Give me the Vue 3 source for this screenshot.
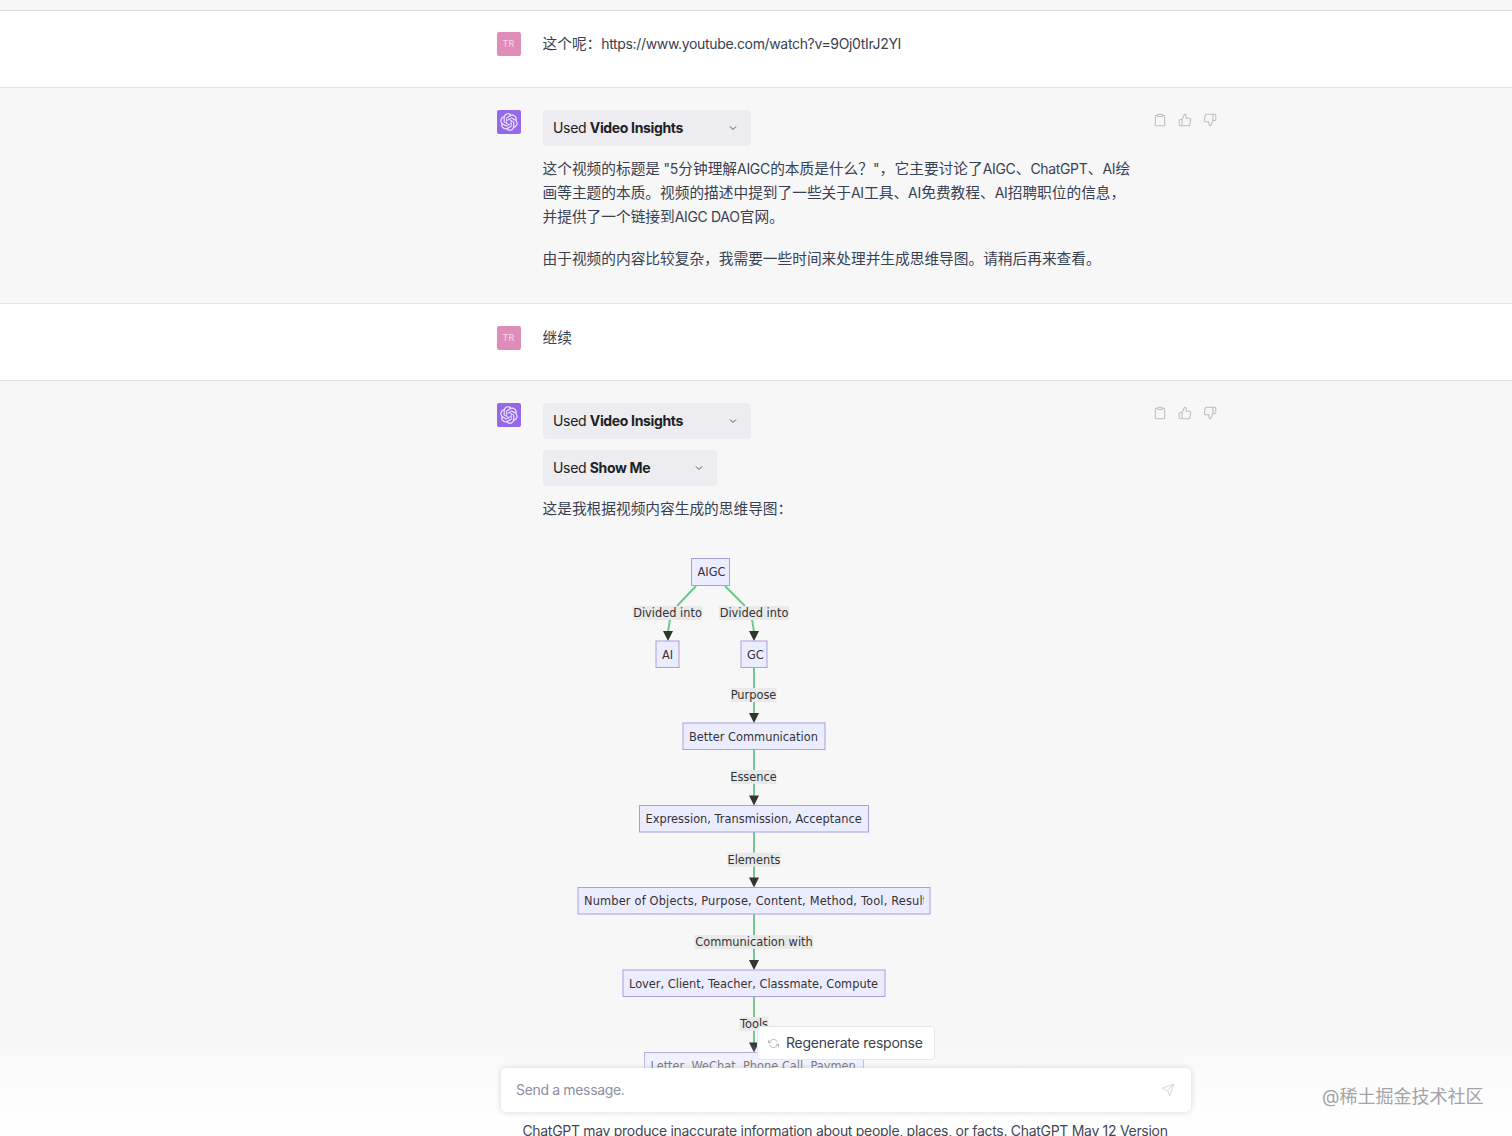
<script setup>
const logo = 'M37.5324 16.8707C37.9808 15.5241 38.1363 14.0974 37.9886 12.6859C37.8409 11.2744 37.3934 9.91076 36.676 8.68622C35.6126 6.83404 33.9882 5.3676 32.0373 4.4985C30.0864 3.62941 27.9098 3.40259 25.8215 3.85078C24.8796 2.7893 23.7219 1.94125 22.4257 1.36341C21.1295 0.785575 19.7249 0.491269 18.3058 0.500197C16.1708 0.495044 14.0893 1.16803 12.3614 2.42214C10.6335 3.67624 9.34853 5.44666 8.6917 7.47815C7.30085 7.76286 5.98686 8.3414 4.8377 9.17505C3.68854 10.0087 2.73073 11.0782 2.02839 12.312C0.956464 14.1591 0.498905 16.2988 0.721698 18.4228C0.944492 20.5467 1.83612 22.5449 3.268 24.1293C2.81966 25.4759 2.66413 26.9026 2.81182 28.3141C2.95951 29.7256 3.40701 31.0892 4.12437 32.3138C5.18791 34.1659 6.8123 35.6322 8.76321 36.5013C10.7141 37.3704 12.8907 37.5973 14.9789 37.1492C15.9208 38.2107 17.0786 39.0587 18.3747 39.6366C19.6709 40.2144 21.0755 40.5087 22.4946 40.4998C24.6307 40.5054 26.7133 39.8321 28.4418 38.5772C30.1704 37.3223 31.4556 35.5506 32.1119 33.5179C33.5027 33.2332 34.8167 32.6547 35.9659 31.821C37.115 30.9874 38.0728 29.9178 38.7752 28.684C39.8458 26.8371 40.3023 24.6979 40.0789 22.5748C39.8556 20.4517 38.9639 18.4544 37.5324 16.8707ZM22.4978 37.8849C20.7443 37.8874 19.0459 37.2733 17.6994 36.1501C17.7601 36.117 17.8666 36.0586 17.936 36.0161L25.9004 31.4156C26.1003 31.3019 26.2663 31.137 26.3813 30.9378C26.4964 30.7386 26.5563 30.5124 26.5549 30.2825V19.0542L29.9213 20.998C29.9389 21.0068 29.9541 21.0198 29.9656 21.0359C29.977 21.052 29.9842 21.0707 29.9867 21.0902V30.3889C29.9842 32.375 29.1946 34.2791 27.7909 35.6841C26.3872 37.0892 24.4838 37.8806 22.4978 37.8849ZM6.39227 31.0064C5.51397 29.4888 5.19742 27.7107 5.49804 25.9832C5.55718 26.0187 5.66048 26.0818 5.73461 26.1244L13.699 30.7248C13.8975 30.8408 14.1233 30.902 14.3532 30.902C14.583 30.902 14.8088 30.8408 15.0073 30.7248L24.731 25.1103V28.9979C24.7321 29.0177 24.7283 29.0376 24.7199 29.0556C24.7115 29.0736 24.6988 29.0893 24.6829 29.1012L16.6317 33.7497C14.9096 34.7416 12.8643 35.0097 10.9447 34.4954C9.02506 33.9811 7.38785 32.7263 6.39227 31.0064ZM4.29707 13.6194C5.17156 12.0998 6.55279 10.9364 8.19885 10.3327C8.19885 10.4013 8.19491 10.5228 8.19491 10.6071V19.808C8.19351 20.0378 8.25334 20.2638 8.36823 20.4629C8.48312 20.6619 8.64893 20.8267 8.84863 20.9404L18.5723 26.5542L15.206 28.4979C15.1894 28.5089 15.1703 28.5155 15.1505 28.5173C15.1307 28.5191 15.1107 28.516 15.0924 28.5082L7.04046 23.8557C5.32135 22.8601 4.06716 21.2235 3.55289 19.3046C3.03862 17.3858 3.30624 15.3413 4.29707 13.6194ZM31.955 20.0556L22.2312 14.4411L25.5976 12.4981C25.6142 12.4872 25.6333 12.4805 25.6531 12.4787C25.6729 12.4769 25.6928 12.4801 25.7111 12.4879L33.7631 17.1364C34.9967 17.849 36.0017 18.8982 36.6606 20.1613C37.3194 21.4244 37.6047 22.849 37.4832 24.2684C37.3617 25.6878 36.8382 27.0432 35.9743 28.1759C35.1103 29.3086 33.9415 30.1717 32.6047 30.6641C32.6047 30.5947 32.6047 30.4733 32.6047 30.3889V21.188C32.6066 20.9586 32.5474 20.7328 32.4332 20.5338C32.319 20.3348 32.154 20.1698 31.955 20.0556ZM35.3055 15.0128C35.2464 14.9765 35.1431 14.9142 35.069 14.8717L27.1045 10.2712C26.906 10.1554 26.6803 10.0943 26.4504 10.0943C26.2206 10.0943 25.9948 10.1554 25.7963 10.2712L16.0726 15.8858V11.9982C16.0715 11.9783 16.0753 11.9585 16.0837 11.9405C16.0921 11.9225 16.1048 11.9068 16.1207 11.8949L24.1719 7.25025C25.4053 6.53903 26.8158 6.19376 28.2383 6.25482C29.6608 6.31589 31.0364 6.78077 32.2044 7.59508C33.3723 8.40939 34.2842 9.53945 34.8334 10.8531C35.3826 12.1667 35.5464 13.6095 35.3055 15.0128ZM14.2424 21.9419L10.8752 19.9981C10.8576 19.9893 10.8423 19.9763 10.8309 19.9602C10.8195 19.9441 10.8122 19.9254 10.8098 19.9058V10.6071C10.8107 9.18295 11.2173 7.78848 11.9819 6.58696C12.7466 5.38544 13.8377 4.42659 15.1275 3.82264C16.4173 3.21869 17.8524 2.99464 19.2649 3.1767C20.6775 3.35876 22.0089 3.93941 23.1034 4.85067C23.0427 4.88379 22.937 4.94215 22.8668 4.98473L14.9024 9.58517C14.7025 9.69878 14.5366 9.86356 14.4215 10.0626C14.3065 10.2616 14.2466 10.4877 14.2479 10.7175L14.2424 21.9419ZM16.071 17.9991L20.4018 15.4978L24.7325 17.9975V22.9985L20.4018 25.4983L16.071 22.9985V17.9991Z'

const nodes = [
  { x: 691.5, y: 558.5, w: 38, h: 27, t: 'AIGC' },
  { x: 656, y: 641, w: 23, h: 26.5, t: 'AI' },
  { x: 741, y: 641, w: 26, h: 26.5, t: 'GC' },
  { x: 683, y: 723, w: 142, h: 26.5, t: 'Better Communication' },
  { x: 639.5, y: 805.5, w: 229, h: 26.5, t: 'Expression, Transmission, Acceptance' },
  { x: 578, y: 887.5, w: 352, h: 26.5, t: 'Number of Objects, Purpose, Content, Method, Tool, Result', wide: true },
  { x: 623, y: 970, w: 262, h: 26.5, t: 'Lover, Client, Teacher, Classmate, Compute' },
  { x: 644.5, y: 1052.5, w: 219, h: 26.5, t: 'Letter, WeChat, Phone Call, Paymen' }
]
const edges = [
  'M696 586 L677 606 M670 619 L668 632',
  'M725 586 L745 606 M752 619 L754 632',
  'M754 667 V714', 'M754 749 V796', 'M754 832 V878', 'M754 914 V961', 'M754 997 V1043'
]
const arrows = [[668, 641], [754, 641], [754, 723], [754, 805.5], [754, 887.5], [754, 970], [754, 1052.5]]
const labels = [
  { x: 667.5, y: 613, w: 70, t: 'Divided into' },
  { x: 754, y: 613, w: 70, t: 'Divided into' },
  { x: 753.5, y: 695, w: 46, t: 'Purpose' },
  { x: 753.5, y: 777, w: 45, t: 'Essence' },
  { x: 754, y: 859.5, w: 53, t: 'Elements' },
  { x: 754, y: 942, w: 119, t: 'Communication with' },
  { x: 754, y: 1024, w: 29, t: 'Tools' }
]
</script>

<template>
  <div class="page">
    <div class="strip"></div>

    <section class="row user">
      <div class="avatar tr">TR</div>
      <div class="main"><p>这个呢：<span class="en">https://www.youtube.com/watch?v=9Oj0tIrJ2YI</span></p></div>
    </section>

    <section class="row bot">
      <div class="avatar gpt"><svg viewBox="0 0 41 41" class="logo"><path :d="logo" fill="currentColor" /></svg></div>
      <div class="main">
        <div class="chip wide"><span class="en">Used <b>Video Insights</b></span><svg class="chev" viewBox="0 0 24 24"><polyline points="6 9 12 15 18 9" /></svg></div>
        <div class="prose">
          <p>这个视频的标题是<span class="en"> "5</span>分钟理解<span class="en">AIGC</span>的本质是什么？<span class="en">"</span>，<span class="en gap"> </span>它主要讨论了<span class="en">AIGC</span>、<span class="en">ChatGPT</span>、<span class="en">AI</span>绘<span>画等主题的本质。视频的描述中提到了一些关于</span><span class="en">AI</span>工具、<span class="en">AI</span>免费教程、<span class="en">AI</span>招聘职位的信息，<span>并提供了一个链接到</span><span class="en">AIGC DAO</span>官网。</p>
          <p>由于视频的内容比较复杂，我需要一些时间来处理并生成思维导图。请稍后再来查看。</p>
        </div>
      </div>
      <div class="actions">
        <svg viewBox="0 0 24 24"><path d="M16 4h2a2 2 0 0 1 2 2v14a2 2 0 0 1-2 2H6a2 2 0 0 1-2-2V6a2 2 0 0 1 2-2h2" /><rect x="8" y="2" width="8" height="4" rx="1" /></svg>
        <svg viewBox="0 0 24 24"><path d="M14 9V5a3 3 0 0 0-3-3l-4 9v11h11.28a2 2 0 0 0 2-1.7l1.38-9a2 2 0 0 0-2-2.3zM7 22H4a2 2 0 0 1-2-2v-7a2 2 0 0 1 2-2h3" /></svg>
        <svg viewBox="0 0 24 24"><path d="M10 15v4a3 3 0 0 0 3 3l4-9V2H5.72a2 2 0 0 0-2 1.7l-1.38 9a2 2 0 0 0 2 2.3zm7-13h2.67A2.31 2.31 0 0 1 22 4v7a2.31 2.31 0 0 1-2.33 2H17" /></svg>
      </div>
    </section>

    <section class="row user second">
      <div class="avatar tr">TR</div>
      <div class="main"><p>继续</p></div>
    </section>

    <section class="row bot last">
      <div class="avatar gpt"><svg viewBox="0 0 41 41" class="logo"><path :d="logo" fill="currentColor" /></svg></div>
      <div class="main">
        <div class="chip wide"><span class="en">Used <b>Video Insights</b></span><svg class="chev" viewBox="0 0 24 24"><polyline points="6 9 12 15 18 9" /></svg></div>
        <div class="chip narrow"><span class="en">Used <b>Show Me</b></span><svg class="chev" viewBox="0 0 24 24"><polyline points="6 9 12 15 18 9" /></svg></div>
        <p class="lead">这是我根据视频内容生成的思维导图：</p>
        <svg class="diagram" viewBox="543 530 500 620" width="500" height="620">
          <path v-for="(e, i) in edges" :key="'e' + i" :d="e" class="edge" />
          <polygon v-for="(a, i) in arrows" :key="'a' + i" class="arrow"
            :points="`${a[0]},${a[1]} ${a[0] - 5},${a[1] - 10} ${a[0] + 5},${a[1] - 10}`" />
          <g v-for="(l, i) in labels" :key="'l' + i">
            <rect class="label-bg" :x="l.x - l.w / 2" :y="l.y - 7" :width="l.w" height="14" />
            <text class="label" :x="l.x" :y="l.y + 4">{{ l.t }}</text>
          </g>
          <g v-for="(n, i) in nodes" :key="'n' + i">
            <rect class="node" :x="n.x" :y="n.y" :width="n.w" :height="n.h" />
            <svg :x="n.x + 6" :y="n.y" :width="Math.max(n.w - 12, 30)" :height="n.h">
              <text class="node-text" :class="{ stretch: n.wide }" x="0" y="17.5">{{ n.t }}</text>
            </svg>
          </g>
        </svg>
      </div>
      <div class="actions">
        <svg viewBox="0 0 24 24"><path d="M16 4h2a2 2 0 0 1 2 2v14a2 2 0 0 1-2 2H6a2 2 0 0 1-2-2V6a2 2 0 0 1 2-2h2" /><rect x="8" y="2" width="8" height="4" rx="1" /></svg>
        <svg viewBox="0 0 24 24"><path d="M14 9V5a3 3 0 0 0-3-3l-4 9v11h11.28a2 2 0 0 0 2-1.7l1.38-9a2 2 0 0 0-2-2.3zM7 22H4a2 2 0 0 1-2-2v-7a2 2 0 0 1 2-2h3" /></svg>
        <svg viewBox="0 0 24 24"><path d="M10 15v4a3 3 0 0 0 3 3l4-9V2H5.72a2 2 0 0 0-2 1.7l-1.38 9a2 2 0 0 0 2 2.3zm7-13h2.67A2.31 2.31 0 0 1 22 4v7a2.31 2.31 0 0 1-2.33 2H17" /></svg>
      </div>
    </section>

    <footer class="composer">
      <button class="regen">
        <svg viewBox="0 0 24 24"><polyline points="1 4 1 10 7 10" /><polyline points="23 20 23 14 17 14" /><path d="M20.49 9A9 9 0 0 0 5.64 5.64L1 10m22 4l-4.64 4.36A9 9 0 0 1 3.51 15" /></svg>
        <span class="en">Regenerate response</span>
      </button>
      <div class="input">
        <span class="en">Send a message.</span>
        <svg viewBox="0 0 24 24"><line x1="22" y1="2" x2="11" y2="13" /><polygon points="22 2 15 22 11 13 2 9 22 2" /></svg>
      </div>
      <p class="note en">ChatGPT may produce inaccurate information about people, places, or facts. ChatGPT May 12 Version</p>
    </footer>

    <div class="watermark">@稀土掘金技术社区</div>
  </div>
</template>

<style scoped>
.page {
  position: relative;
  width: 1512px;
  height: 1136px;
  overflow: hidden;
  background: #fff;
  color: #374151;
  font-family: Inter, "Noto Sans CJK SC", sans-serif;
  font-size: 14.7px;
  line-height: 24px;
}
p { margin: 0; }
.en { font-size: 14px; letter-spacing: -0.34px; }
.prose .en { margin-right: 0.34px; }
.strip {
  height: 10px;
  background: #f7f7f8;
  border-bottom: 1px solid #dcdcdf;
}
.row {
  display: flex;
  padding-left: 496.5px;
  border-bottom: 1px solid #e3e3e6;
}
.user { padding-top: 21px; box-sizing: border-box; background: #fff; height: 77px; }
.user.second { padding-top: 22px; }
.bot { background: #f7f7f8; padding-top: 22px; padding-bottom: 32px; }
.bot.last { border-bottom: 0; padding-bottom: 0; height: 755px; box-sizing: border-box; }
.avatar {
  flex: none;
  width: 24px;
  height: 24px;
  border-radius: 2px;
  display: flex;
  align-items: center;
  justify-content: center;
}
.tr {
  background: #de8db9;
  color: #f6d9e8;
  font-size: 9px;
  letter-spacing: 0.3px;
}
.gpt { background: #9468e8; color: #f3ecff; }
.logo { width: 18px; height: 18px; }
.main { width: 590px; margin-left: 22px; flex: none; }
.chip {
  display: flex;
  align-items: center;
  justify-content: space-between;
  height: 36px;
  box-sizing: border-box;
  padding: 0 12px 0 10.5px;
  border-radius: 4px;
  background: #ececf1;
  color: #202123;
}
.chip b { font-weight: 700; }
.wide { width: 208.5px; }
.narrow { width: 174.5px; margin-top: 11px; }
.chev { width: 12px; height: 12px; fill: none; stroke: #555; stroke-width: 2; }
.prose { margin-top: 11px; }
.prose p + p { margin-top: 18px; }
.lead { margin-top: 11px; }
.diagram { display: block; margin-top: 9px; margin-left: 0.5px; overflow: hidden; }
.edge { fill: none; stroke: #6ac78c; stroke-width: 1.9; }
.arrow { fill: #333; }
.label-bg { fill: #e9e9e9; }
.label, .node-text {
  font-family: "DejaVu Sans", sans-serif;
  font-size: 11.4px;
  fill: #333;
}
.node-text.stretch { letter-spacing: 0.16px; }
.label { text-anchor: middle; }
.node { fill: #ececff; stroke: #a99ee0; stroke-width: 1; }
.actions {
  display: flex;
  gap: 11px;
  margin-left: 20.5px;
  padding-top: 3px;
  height: 14px;
}
.actions svg {
  width: 14px;
  height: 14px;
  fill: none;
  stroke: #bdbdc3;
  stroke-width: 1.8;
  stroke-linecap: round;
  stroke-linejoin: round;
}
.composer {
  position: absolute;
  left: 0;
  right: 0;
  bottom: 0;
  height: 110px;
  overflow: hidden;
  display: flex;
  flex-direction: column;
  align-items: center;
  padding-left: 180px;
  box-sizing: border-box;
  background: linear-gradient(to bottom, rgba(255, 255, 255, 0) 15%, rgba(255, 255, 255, 0.55) 45%, #fff 100%);
}
.regen {
  flex: none;
  display: flex;
  align-items: center;
  gap: 7px;
  height: 34px;
  width: 178px;
  padding: 0 0 0 10px;
  box-sizing: border-box;
  border: 1px solid #e6e6ea;
  border-radius: 4px;
  background: #fff;
  color: #40414f;
  font: inherit;
}
.regen .en { letter-spacing: -0.24px; }
.regen svg {
  width: 11px;
  height: 11px;
  fill: none;
  stroke: #b0b0b8;
  stroke-width: 2;
}
.input {
  flex: none;
  display: flex;
  align-items: center;
  justify-content: space-between;
  width: 690px;
  height: 44px;
  margin-top: 8px;
  padding: 0 16px 0 15px;
  box-sizing: border-box;
  border-radius: 5px;
  background: #fff;
  box-shadow: 0 0 6px rgba(0, 0, 0, 0.16);
  color: #8e8ea0;
}
.input svg {
  width: 14px;
  height: 14px;
  fill: none;
  stroke: #d2d2d8;
  stroke-width: 1.6;
}
.note {
  flex: none;
  margin-top: 7px;
  margin-left: -2px;
  letter-spacing: -0.3px;
  white-space: nowrap;
  color: #444654;
}
.watermark {
  position: absolute;
  left: 1322px;
  top: 1085px;
  font-size: 18px;
  color: #a3a3a8;
  text-shadow: 0 0 6px #fff;
  white-space: nowrap;
}
</style>
